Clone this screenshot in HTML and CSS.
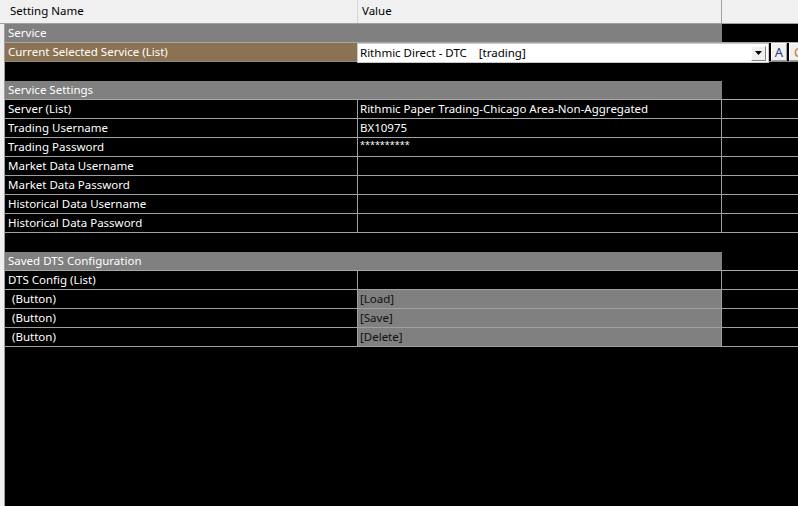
FILE: index.html
```html
<!DOCTYPE html>
<html lang="en">
<head>
    <meta charset="UTF-8">
    <title>Service Settings</title>
    <link rel="stylesheet" href="styles.css">
</head>
<body>
    <div class="head">
        <div class="hcell name">Setting Name</div>
        <div class="hcell value">Value</div>
        <div class="hcell rest"></div>
    </div>

    <div class="grid">
        <div class="row group"><div class="gcell">Service</div><div class="cell rest"></div></div>
        <div class="row selected">
            <div class="cell name">Current Selected Service (List)</div>
            <div class="cell value"></div>
            <div class="cell rest"></div>
            <!-- in-place list editor -->
            <div class="editor">
                <div class="combo">
                    <span>Rithmic Direct - DTC&nbsp;&nbsp;&nbsp;&nbsp;[trading]</span>
                    <div class="drop"><svg width="7" height="4" viewBox="0 0 7 4"><path d="M0 0h7L3.5 4z" fill="#000"/></svg></div>
                </div>
                <div class="tool a">A</div>
                <div class="tool c">C</div>
            </div>
        </div>
        <div class="row blank"></div>

        <div class="row group"><div class="gcell">Service Settings</div><div class="cell rest"></div></div>
        <div class="row"><div class="cell name">Server (List)</div><div class="cell value">Rithmic Paper Trading-Chicago Area-Non-Aggregated</div><div class="cell rest"></div></div>
        <div class="row"><div class="cell name">Trading Username</div><div class="cell value">BX10975</div><div class="cell rest"></div></div>
        <div class="row"><div class="cell name">Trading Password</div><div class="cell value stars">**********</div><div class="cell rest"></div></div>
        <div class="row"><div class="cell name">Market Data Username</div><div class="cell value"></div><div class="cell rest"></div></div>
        <div class="row"><div class="cell name">Market Data Password</div><div class="cell value"></div><div class="cell rest"></div></div>
        <div class="row"><div class="cell name">Historical Data Username</div><div class="cell value"></div><div class="cell rest"></div></div>
        <div class="row"><div class="cell name">Historical Data Password</div><div class="cell value"></div><div class="cell rest"></div></div>
        <div class="row blank"></div>

        <div class="row group"><div class="gcell">Saved DTS Configuration</div><div class="cell rest"></div></div>
        <div class="row"><div class="cell name">DTS Config (List)</div><div class="cell value"></div><div class="cell rest"></div></div>
        <div class="row"><div class="cell name btn">(Button)</div><div class="cell value action">[Load]</div><div class="cell rest"></div></div>
        <div class="row"><div class="cell name btn">(Button)</div><div class="cell value action">[Save]</div><div class="cell rest"></div></div>
        <div class="row"><div class="cell name btn">(Button)</div><div class="cell value action">[Delete]</div><div class="cell rest"></div></div>
    </div>
</body>
</html>
```

FILE: styles.css
```css
body {
    margin: 0;
    overflow: hidden;
    background: #f0f0f0;
    font-family: 'Noto Sans', 'Open Sans', sans-serif;
    font-size: 11.5px;
    height: 100vh;
    display: flex;
    flex-direction: column;
}

/* column header */
.head {
    display: flex;
    height: 23px;
    border-bottom: 1px solid #a0a0a0;
    background: #f0f0f0;
    color: #000;
}

.hcell {
    line-height: 22px;
    box-sizing: border-box;
}

.hcell.name {
    width: 358px;
    padding-left: 10px;
    border-right: 1px solid #d6d6d6;
}

.hcell.value {
    width: 364px;
    padding-left: 4px;
    border-right: 1px solid #a0a0a0;
}

.hcell.rest {
    flex: 1;
}

/* property grid */
.grid {
    flex: 1;
    margin-left: 4px;
    border-left: 1px solid #a0a0a0;
    background: #000;
    color: #fff;
}

.row {
    display: flex;
    height: 19px;
    box-sizing: border-box;
    border-bottom: 1px solid #a0a0a0;
    position: relative;
}

.row.blank {
    border-bottom: 1px solid #000;
}

.cell {
    line-height: 18px;
    box-sizing: border-box;
    white-space: nowrap;
    overflow: hidden;
}

.cell.name {
    width: 353px;
    padding-left: 3px;
    border-right: 1px solid #a0a0a0;
}

.cell.name.btn {
    padding-left: 7px;
}

.cell.value {
    width: 364px;
    padding-left: 2px;
    border-right: 1px solid #a0a0a0;
}

.cell.rest {
    flex: 1;
}

.cell.stars {
    font-size: 9px;
    line-height: 14px;
}

.cell.action {
    background: #808080;
    color: #111;
}

.row.group {
    border-bottom: 1px solid #a8a8a8;
}

.gcell {
    width: 717px;
    padding-left: 3px;
    box-sizing: border-box;
    line-height: 18px;
    background: #808080;
    color: #fff;
}

.row.selected .cell.name {
    background: #8b7253;
}

.row.selected {
    border-bottom-color: #8a8a8a;
}

/* list editor laid over the value cell */
.editor {
    position: absolute;
    left: 352px;
    top: 0;
    display: flex;
    gap: 2px;
    z-index: 2;
}

.combo {
    width: 412px;
    height: 20px;
    box-sizing: border-box;
    background: #fff;
    border: 1px solid #c8c8c8;
    color: #000;
    display: flex;
    align-items: center;
    justify-content: space-between;
    padding-left: 2px;
}

.combo span {
    line-height: 18px;
}

.drop {
    width: 15px;
    height: 15px;
    margin-right: 2px;
    box-sizing: border-box;
    background: #f0f0f0;
    border: 1px solid #fff;
    border-right-color: #808080;
    border-bottom-color: #808080;
    display: flex;
    align-items: center;
    justify-content: center;
}

.tool {
    width: 16px;
    height: 18px;
    box-sizing: border-box;
    background: #f0f0f0;
    border: 1px solid #fff;
    border-right-color: #a0a0a0;
    border-bottom-color: #a0a0a0;
    font-size: 13px;
    line-height: 16px;
    text-align: center;
}

.tool.a {
    color: #1f3a8a;
}

.tool.c {
    color: #c47a1a;
    text-indent: 2px;
}
```
